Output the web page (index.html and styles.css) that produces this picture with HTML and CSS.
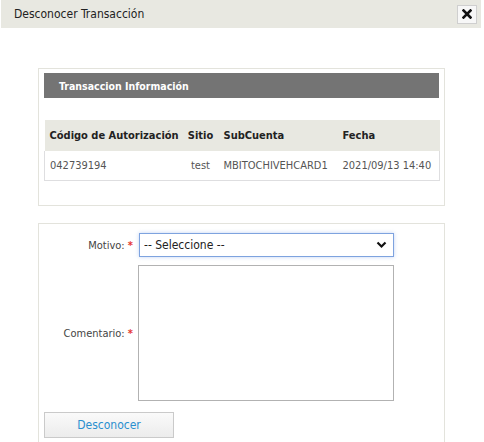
FILE: index.html
```html
<!DOCTYPE html>
<html lang="es">
<head>
<meta charset="utf-8">
<title>Desconocer Transacción</title>
<link rel="stylesheet" href="styles.css">
</head>
<body>
<div class="titlebar">
  <span class="title">Desconocer Transacción</span>
  <button class="close" type="button" aria-label="Cerrar">
    <svg width="10" height="10" viewBox="0 0 10 10"><path d="M1.5 1.5 L8.5 8.5 M8.5 1.5 L1.5 8.5" stroke="#111" stroke-width="2.6" stroke-linecap="square"/></svg>
  </button>
</div>
<div class="content">
  <div class="info-box">
    <div class="info-head">Transaccion Información</div>
    <table class="info-table">
      <colgroup><col class="c1"><col class="c2"><col class="c3"><col class="c4"></colgroup>
      <thead>
        <tr><th>Código de Autorización</th><th class="center">Sitio</th><th>SubCuenta</th><th>Fecha</th></tr>
      </thead>
      <tbody>
        <tr><td>042739194</td><td class="center">test</td><td>MBITOCHIVEHCARD1</td><td>2021/09/13 14:40</td></tr>
      </tbody>
    </table>
  </div>
  <div class="form-box">
    <div class="form-grid">
      <label class="lbl" for="motivo">Motivo: <span class="req">*</span></label>
      <div class="select-wrap">
        <select id="motivo" class="select"><option>-- Seleccione --</option></select>
        <svg class="chev" width="11" height="8" viewBox="0 0 11 8"><path d="M1.5 1.5 L5.5 5.5 L9.5 1.5" fill="none" stroke="#111" stroke-width="2.2"/></svg>
      </div>
      <label class="lbl" for="comentario">Comentario: <span class="req">*</span></label>
      <textarea id="comentario" class="textarea"></textarea>
    </div>
    <button class="btn" type="button">Desconocer</button>
  </div>
</div>
</body>
</html>
```
FILE: styles.css
```css
html, body {
  margin: 0;
  padding: 0;
  background: #fff;
}
body {
  font-family: "DejaVu Sans Condensed", "Liberation Sans", sans-serif;
  font-size: 11px;
  color: #333;
}
.titlebar {
  margin: 0 3px 0 1px;
  height: 28px;
  background: #e8e8e1;
  display: flex;
  align-items: center;
  justify-content: space-between;
  padding: 0 4px 0 13px;
}
.title {
  font-size: 12px;
  color: #222;
}
.close {
  width: 20px;
  height: 19px;
  padding: 0;
  margin: 0;
  border: 1px solid #cfcfcf;
  background: #f7f7f7;
  display: flex;
  align-items: center;
  justify-content: center;
}
.content {
  padding: 40px 39px 0 38px;
}
.info-box {
  border: 1px solid #e3e3dc;
  padding: 4px 5px 24px 5px;
}
.info-head {
  height: 25px;
  background: #747474;
  color: #fff;
  font-weight: bold;
  font-size: 10.5px;
  display: flex;
  align-items: center;
  padding-left: 15px;
}
.info-table {
  margin-top: 22px;
  width: 100%;
  border-collapse: collapse;
  table-layout: fixed;
}
.c1 { width: 138px; }
.c2 { width: 36px; }
.c3 { width: 119px; }
.c4 { width: 102px; }
.info-table th {
  background: #e8e8e1;
  height: 31px;
  padding: 0 0 0 5px;
  text-align: left;
  font-weight: bold;
  color: #222;
  white-space: nowrap;
}
.info-table td {
  height: 29px;
  padding: 0 0 0 5px;
  color: #555;
  white-space: nowrap;
  border-bottom: 1px solid #dedee0;
}
.info-table td:first-child { border-left: 1px solid #dedee0; }
.info-table td:last-child { border-right: 1px solid #dedee0; }
.info-table .center {
  text-align: center;
  padding: 0;
}
.form-box {
  margin-top: 17px;
  border: 1px solid #e3e3dc;
  border-bottom: none;
  padding: 9px 5px 10px 5px;
  height: 220px;
}
.form-grid {
  display: grid;
  grid-template-columns: 90px 256px;
  column-gap: 4px;
  row-gap: 8px;
  align-items: center;
}
.lbl {
  text-align: right;
  color: #444;
  padding-right: 1px;
}
.req {
  color: #e53935;
  font-weight: bold;
}
.select-wrap {
  position: relative;
  margin-left: 1px;
}
.select {
  display: block;
  width: 255px;
  height: 24px;
  margin: 0;
  padding: 0 0 0 4px;
  border: 1px solid #7ea3df;
  box-shadow: 0 0 4px rgba(120, 160, 230, 0.45);
  background: #fff;
  font-family: inherit;
  font-size: 12px;
  color: #222;
  appearance: none;
  -webkit-appearance: none;
  border-radius: 0;
  outline: none;
}
.chev {
  position: absolute;
  right: 7px;
  top: 8px;
  pointer-events: none;
}
.textarea {
  display: block;
  width: 256px;
  height: 136px;
  margin: 0;
  padding: 0;
  box-sizing: border-box;
  border: 1px solid #b2b2b2;
  resize: none;
  border-radius: 0;
}
.btn {
  margin-top: 11px;
  width: 130px;
  height: 26px;
  border: 1px solid #cacaca;
  background: linear-gradient(#fafafa, #ececec);
  color: #2a8fcf;
  font-family: inherit;
  font-size: 12px;
  padding: 0;
  border-radius: 0;
}
```
